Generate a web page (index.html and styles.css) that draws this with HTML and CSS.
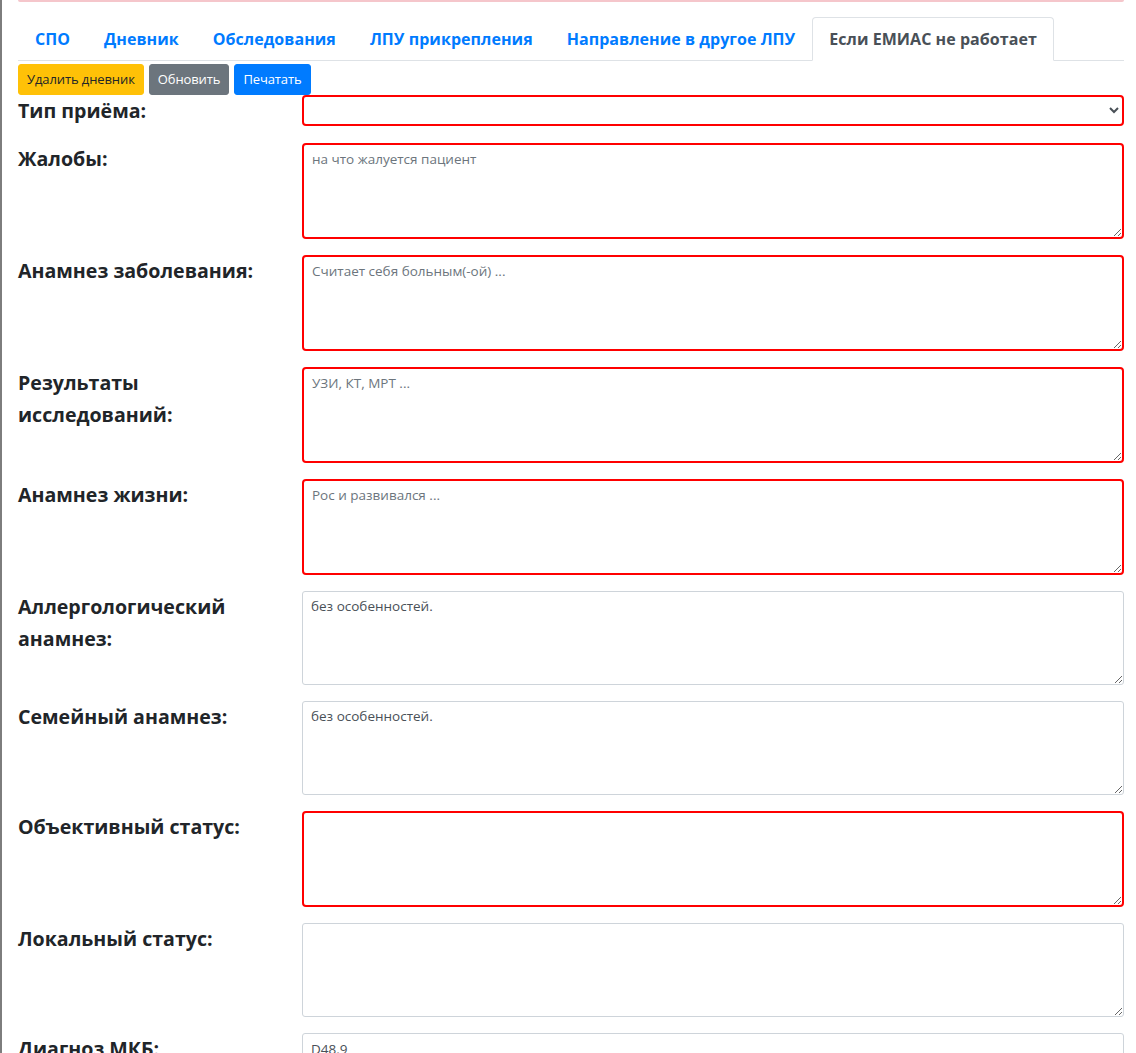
FILE: index.html
```html
<!DOCTYPE html>
<html lang="ru">
<head>
<meta charset="utf-8">
<title>Дневник</title>
<link rel="stylesheet" href="styles.css">
</head>
<body>
<div class="frame">
  <div class="alert-tail"></div>
  <ul class="tabs">
    <li><a class="tab" href="#">СПО</a></li>
    <li><a class="tab" href="#">Дневник</a></li>
    <li><a class="tab" href="#">Обследования</a></li>
    <li><a class="tab" href="#">ЛПУ прикрепления</a></li>
    <li><a class="tab" href="#">Направление в другое ЛПУ</a></li>
    <li><a class="tab active" href="#">Если ЕМИАС не работает</a></li>
  </ul>
  <div class="toolbar">
    <button class="btn btn-warning" type="button">Удалить дневник</button>
    <button class="btn btn-secondary" type="button">Обновить</button>
    <button class="btn btn-primary" type="button">Печатать</button>
  </div>
  <form class="form">
    <div class="row">
      <label class="lbl">Тип приёма:</label>
      <div class="field"><select class="ctl ctl-select invalid"><option></option></select></div>
    </div>
    <div class="row">
      <label class="lbl">Жалобы:</label>
      <div class="field"><textarea class="ctl area invalid" placeholder="на что жалуется пациент"></textarea></div>
    </div>
    <div class="row">
      <label class="lbl">Анамнез заболевания:</label>
      <div class="field"><textarea class="ctl area invalid" placeholder="Считает себя больным(-ой) ..."></textarea></div>
    </div>
    <div class="row">
      <label class="lbl">Результаты исследований:</label>
      <div class="field"><textarea class="ctl area invalid" placeholder="УЗИ, КТ, МРТ ..."></textarea></div>
    </div>
    <div class="row">
      <label class="lbl">Анамнез жизни:</label>
      <div class="field"><textarea class="ctl area invalid" placeholder="Рос и развивался ..."></textarea></div>
    </div>
    <div class="row">
      <label class="lbl">Аллергологический анамнез:</label>
      <div class="field"><textarea class="ctl area">без особенностей.</textarea></div>
    </div>
    <div class="row">
      <label class="lbl">Семейный анамнез:</label>
      <div class="field"><textarea class="ctl area">без особенностей.</textarea></div>
    </div>
    <div class="row">
      <label class="lbl">Объективный статус:</label>
      <div class="field"><textarea class="ctl area invalid"></textarea></div>
    </div>
    <div class="row">
      <label class="lbl">Локальный статус:</label>
      <div class="field"><textarea class="ctl area"></textarea></div>
    </div>
    <div class="row">
      <label class="lbl">Диагноз МКБ:</label>
      <div class="field"><input class="ctl ctl-input" type="text" value="D48.9"></div>
    </div>
  </form>
</div>
</body>
</html>
```

FILE: styles.css
```css
html, body {
  margin: 0;
  padding: 0;
  height: 100%;
  overflow: hidden;
  background: #fff;
}

body {
  font-family: "Open Sans", "Noto Sans", sans-serif;
  color: #212529;
  font-size: 16px;
  line-height: 1.5;
}

.frame {
  box-sizing: border-box;
  min-height: 100%;
  border-left: 2px solid #7d7d7d;
  padding: 0 12px 0 16px;
}

.alert-tail {
  height: 2px;
  background: #f5c6cb;
  border-radius: 0 0 4px 4px;
  margin: 0 0 15px 0;
}

.tabs {
  display: flex;
  list-style: none;
  margin: 0;
  padding: 0;
  border-bottom: 1px solid #dee2e6;
}

.tabs li {
  margin-bottom: -1px;
}

.tab {
  display: block;
  padding: 9px 16px;
  border: 1px solid transparent;
  border-top-left-radius: 4px;
  border-top-right-radius: 4px;
  color: #007bff;
  font-weight: 700;
  font-size: 16px;
  line-height: 24px;
  text-decoration: none;
  letter-spacing: 0.05px;
}

.tab.active {
  color: #495057;
  background: #fff;
  border-color: #dee2e6 #dee2e6 #fff;
}

.toolbar {
  display: flex;
  gap: 5px;
  margin: 3px 0 0;
}

.btn {
  font-family: "Open Sans", "Noto Sans", sans-serif;
  font-size: 13px;
  line-height: 21px;
  padding: 4px 8px;
  border: 1px solid transparent;
  border-radius: 3px;
  cursor: pointer;
  letter-spacing: -0.1px;
}

.btn-warning { background: #ffc107; border-color: #ffc107; color: #212529; }
.btn-secondary { background: #6c757d; border-color: #6c757d; color: #fff; }
.btn-primary { background: #007bff; border-color: #007bff; color: #fff; }

.form {
  margin: 0;
}

.row {
  display: grid;
  grid-template-columns: 284px 1fr;
  margin-bottom: 16px;
}

.lbl {
  font-size: 19.6px;
  font-weight: 700;
  line-height: 32px;
  color: #212529;
  padding-right: 30px;
}

.field {
  min-width: 0;
}

.ctl {
  display: block;
  box-sizing: border-box;
  width: 100%;
  font-family: "Open Sans", "Noto Sans", sans-serif;
  font-size: 13.5px;
  line-height: 21px;
  color: #495057;
  background: #fff;
  border: 1px solid #ced4da;
  border-radius: 3px;
  padding: 4px 8px;
  margin: 0;
}

.ctl::placeholder {
  color: #6c757d;
  opacity: 1;
}

.ctl-select {
  height: 31px;
}

.ctl-input {
  height: 31px;
}

.area {
  height: 94px;
  resize: vertical;
}

.invalid {
  border: 2px solid #ff0000;
  border-radius: 4px;
}

.area.invalid {
  height: 96px;
  padding: 4px 8px;
}
```
